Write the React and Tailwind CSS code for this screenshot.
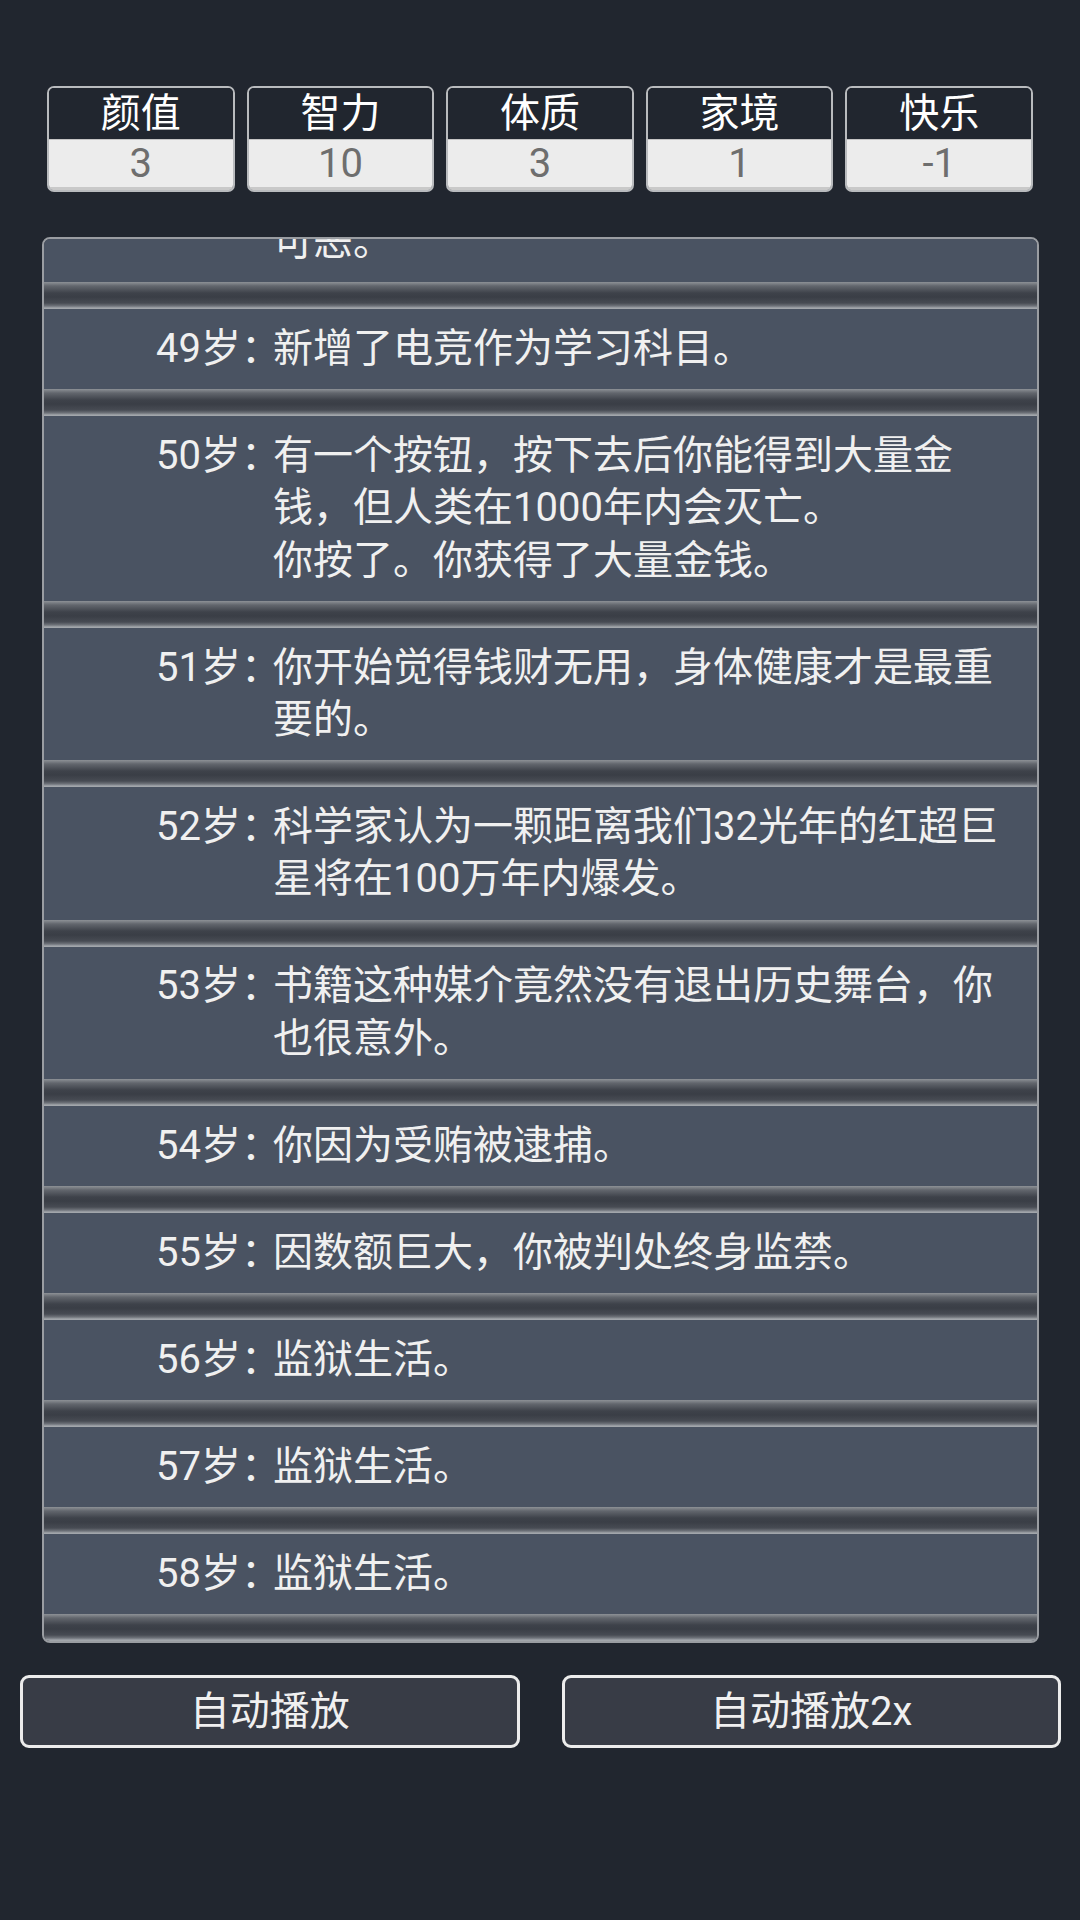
const stats = [
  { label: "颜值", value: 3 },
  { label: "智力", value: 10 },
  { label: "体质", value: 3 },
  { label: "家境", value: 1 },
  { label: "快乐", value: -1 },
];

const events = [
  { age: 48, text: "你的钱包被偷了。\n可恶。" },
  { age: 49, text: "新增了电竞作为学习科目。" },
  { age: 50, text: "有一个按钮，按下去后你能得到大量金钱，但人类在1000年内会灭亡。\n你按了。你获得了大量金钱。" },
  { age: 51, text: "你开始觉得钱财无用，身体健康才是最重要的。" },
  { age: 52, text: "科学家认为一颗距离我们32光年的红超巨星将在100万年内爆发。" },
  { age: 53, text: "书籍这种媒介竟然没有退出历史舞台，你也很意外。" },
  { age: 54, text: "你因为受贿被逮捕。" },
  { age: 55, text: "因数额巨大，你被判处终身监禁。" },
  { age: 56, text: "监狱生活。" },
  { age: 57, text: "监狱生活。" },
  { age: 58, text: "监狱生活。" },
];

function StatBox({ label, value }) {
  return (
    <div className="flex flex-col rounded-[7px] border-2 border-[#b9bbbe] overflow-hidden">
      <div className="h-[52px] bg-[#21262f] border-b border-[#c4c4c4] text-center text-white text-[40px] leading-[51px]">
        {label}
      </div>
      <div className="h-[50px] bg-[#ececec] border-b-[3px] border-[#c9c9c9] text-center text-[#6e6e6e] text-[40px] leading-[47px]">
        {value}
      </div>
    </div>
  );
}

function EventRow({ age, text }) {
  return (
    <>
      <div className="flex bg-[#4a5362] py-[13.8px] text-[40px] leading-[52.4px] text-[#f0f0f0]">
        <span className="w-[229px] shrink-0 text-right whitespace-nowrap">
          {age}岁<span className="tracking-[-8px]">：</span>
        </span>
        <span className="flex-1 pr-[24px] whitespace-pre-line">{text}</span>
      </div>
      {/* gap between rows */}
      <div className="h-[27px] bg-[linear-gradient(to_bottom,#8d9196_0px,#62666d_4px,#3e424a_11px,#3a3e46_15px,#474b53_21px,#6f737a_24px,#a2a6ab_26px,#a2a6ab_27px)]" />
    </>
  );
}

function App() {
  return (
    <div className="w-full min-h-screen bg-[#21262f] pt-[86px] font-['Roboto','Noto_Sans_CJK_SC',sans-serif]">

      {/* Stats */}
      <div className="grid grid-cols-5 gap-3 ml-[47px] mr-[47px] h-[106px]">
        {stats.map((s) => (
          <StatBox key={s.label} label={s.label} value={s.value} />
        ))}
      </div>

      {/* Life trajectory */}
      <div className="mt-[45px] ml-[42px] mr-[41px] h-[1406px] rounded-[8px] border-2 border-[#9a9da2] bg-[#3d414a] overflow-hidden flex flex-col justify-end">
        <div className="shrink-0">
          {events.map((e) => (
            <EventRow key={e.age} age={e.age} text={e.text} />
          ))}
        </div>
      </div>

      {/* Buttons */}
      <div className="mt-[32px] grid grid-cols-2 gap-[42px] pl-[20px] pr-[19px]">
        <button className="h-[73px] rounded-[9px] border-[3px] border-[#ececec] bg-[#383c46] text-[#f0f0f0] text-[40px] leading-[52px]">
          自动播放
        </button>
        <button className="h-[73px] rounded-[9px] border-[3px] border-[#ececec] bg-[#383c46] text-[#f0f0f0] text-[40px] leading-[52px]">
          自动播放2x
        </button>
      </div>

    </div>
  );
}

export default App;
